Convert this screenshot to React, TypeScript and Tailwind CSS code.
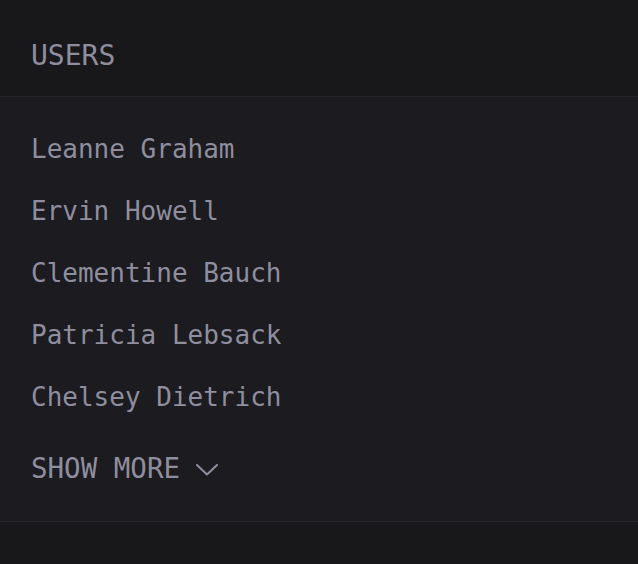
const users = [
  "Leanne Graham",
  "Ervin Howell",
  "Clementine Bauch",
  "Patricia Lebsack",
  "Chelsey Dietrich",
];

const mono = { fontFamily: '"DejaVu Sans Mono", "Liberation Mono", monospace' };

export default function App() {
  return (
    <div className="min-h-[564px] w-full bg-[#18181b] text-[#8f8e9e]" style={mono}>
      {/* header */}
      <div className="px-[31px] pt-[39px] pb-[23px] border-b border-[#26262c]">
        <h2 className="text-[28px] leading-[34px]">USERS</h2>
      </div>

      {/* list */}
      <div className="bg-[#1b1b20] border-b border-[#26262c] px-[31px] pt-[21px] pb-[21px]">
        <ul>
          {users.map((name) => (
            <li key={name} className="text-[26px] leading-[62px] h-[62px] whitespace-nowrap">
              {name}
            </li>
          ))}
        </ul>
        <button className="mt-[10px] h-[62px] flex items-center gap-[16px] text-[27.5px] text-[#8f8e9e]">
          <span>SHOW MORE</span>
          <svg width="22" height="12" viewBox="0 0 22 12" fill="none" className="mt-[2px]">
            <path d="M1 1 L11 10.5 L21 1" stroke="currentColor" strokeWidth="2" strokeLinecap="round" strokeLinejoin="round" />
          </svg>
        </button>
      </div>
    </div>
  );
}
